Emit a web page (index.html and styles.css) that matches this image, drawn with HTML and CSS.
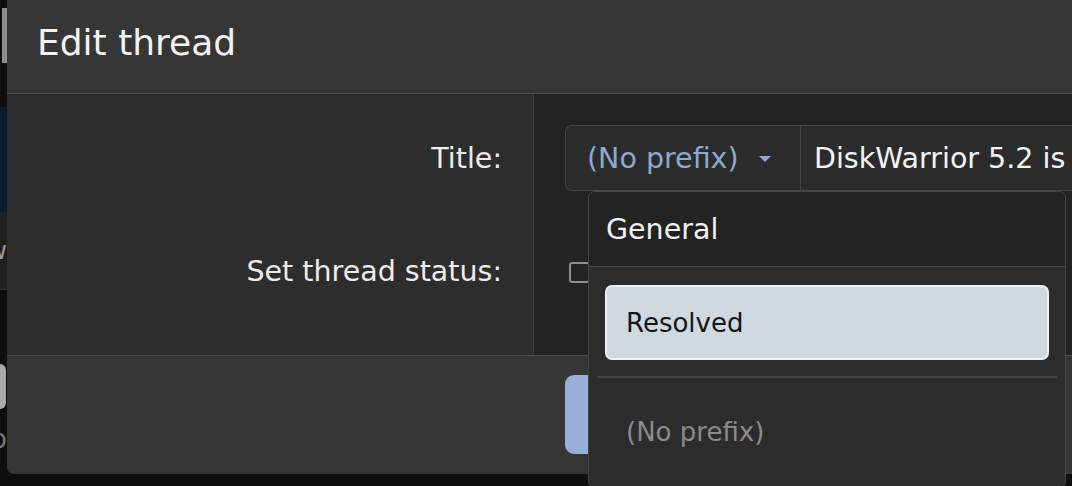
FILE: index.html
```html
<!DOCTYPE html>
<html lang="en">
<head>
<meta charset="utf-8">
<title>Edit thread</title>
<link rel="stylesheet" href="styles.css">
</head>
<body>
<div class="page">
  <div class="bg-strip">
    <div class="bg-bar"></div>
    <div class="bg-nav"></div>
    <div class="bg-row"><span>Vw</span></div>
    <div class="bg-btn"></div>
    <div class="bg-text"><span>Po</span></div>
  </div>

  <div class="modal">
    <div class="modal-head">
      <h1 class="modal-title">Edit thread</h1>
    </div>

    <div class="modal-body">
      <div class="label-cell row-first">Title:</div>
      <div class="field-cell row-first">
        <div class="input-group">
          <div class="prefix-btn">
            <span class="prefix-text">(No prefix)</span>
            <span class="caret"></span>
          </div>
          <div class="title-input">DiskWarrior 5.2 is available for download now</div>

          <div class="menu">
            <div class="menu-header">General</div>
            <div class="menu-body">
              <div class="menu-item is-active">Resolved</div>
              <div class="menu-sep"></div>
              <div class="menu-item is-muted">(No prefix)</div>
            </div>
          </div>
        </div>
      </div>

      <div class="label-cell row-second">Set thread status:</div>
      <div class="field-cell row-second">
        <div class="check-line">
          <span class="checkbox"></span>
          <span class="check-label">Locked</span>
        </div>
        <div class="hint">Locked threads cannot receive new replies, cc</div>
      </div>
    </div>

    <div class="modal-foot">
      <div class="foot-buttons">
        <div class="save-btn">Save</div>
      </div>
    </div>
  </div>
</div>
</body>
</html>
```

FILE: styles.css
```css
html, body {
  margin: 0;
  padding: 0;
}

body {
  width: 1072px;
  height: 486px;
  overflow: hidden;
  background: #0e0e0e;
  font-family: "DejaVu Sans", Verdana, sans-serif;
  color: #ececec;
}

.page {
  display: flex;
  align-items: flex-start;
  height: 486px;
}

/* background page fragments peeking out at left */
.bg-strip {
  flex: none;
  width: 7px;
  height: 486px;
  display: flex;
  flex-direction: column;
  overflow: hidden;
}

.bg-bar {
  height: 55px;
  margin-top: 8px;
  margin-left: 2px;
  background: #8e8e8e;
}

.bg-nav {
  height: 105px;
  margin-top: 44px;
  background: #0c1a2d;
}

.bg-row {
  height: 77px;
  background: #1f1f1f;
  border-bottom: 1px solid #343434;
  display: flex;
  justify-content: flex-end;
  align-items: center;
  font-size: 24px;
  color: #9a9a9a;
}

.bg-btn {
  width: 6px;
  height: 45px;
  margin-top: 74px;
  background: #a9a9a9;
  border-radius: 0 6px 6px 0;
}

.bg-text {
  height: 40px;
  margin-top: 10px;
  display: flex;
  justify-content: flex-end;
  align-items: center;
  font-size: 26px;
  color: #7a7a7a;
}

/* modal */
.modal {
  flex: none;
  width: 1120px;
  border-radius: 0 0 0 7px;
  position: relative;
}

.modal-head {
  height: 94px;
  box-sizing: border-box;
  background: #363636;
  border-bottom: 1px solid #4b4b4b;
  padding-left: 30px;
}

.modal-title {
  margin: 0;
  padding-top: 22px;
  font-size: 36px;
  font-weight: normal;
  line-height: 42px;
  color: #f2f2f2;
}

.modal-body {
  display: grid;
  grid-template-columns: 526px 1fr;
  grid-template-rows: 146px 115px;
  height: 261px;
}

.label-cell {
  background: #2d2d2d;
  text-align: right;
  padding-right: 31px;
  font-size: 28.5px;
  color: #ececec;
}

.field-cell {
  background: #232323;
  border-left: 1px solid #3d3d3d;
  padding-left: 31px;
  overflow: hidden;
}

.label-cell.row-first {
  padding-top: 31px;
  line-height: 68px;
}

.field-cell.row-first {
  padding-top: 31px;
  overflow: visible;
}

.label-cell.row-second {
  line-height: 64px;
}

/* title input group */
.input-group {
  position: relative;
  display: flex;
  height: 66px;
  box-sizing: border-box;
  border: 1px solid #454545;
  border-right: none;
  border-radius: 7px 0 0 7px;
  background: #2b2b2b;
}

.prefix-btn {
  flex: none;
  width: 235px;
  box-sizing: border-box;
  display: flex;
  align-items: center;
  padding-left: 21px;
  border-right: 1px solid #454545;
  font-size: 28.5px;
  color: #8ea8cf;
}

.caret {
  width: 0;
  height: 0;
  margin-left: 20px;
  margin-top: 2px;
  border-left: 6px solid transparent;
  border-right: 6px solid transparent;
  border-top: 6px solid #8ea8cf;
}

.title-input {
  flex: 1;
  display: flex;
  align-items: center;
  padding-left: 13px;
  font-size: 28.5px;
  color: #f4f4f4;
  white-space: nowrap;
  overflow: hidden;
}

/* dropdown menu */
.menu {
  position: absolute;
  top: calc(100% + 1px);
  left: 22px;
  width: 478px;
  height: 297px;
  box-sizing: border-box;
  border: 1px solid #474747;
  border-radius: 7px;
  background: #2c2c2c;
  overflow: hidden;
  z-index: 5;
}

.menu-header {
  height: 75px;
  box-sizing: border-box;
  padding-left: 17px;
  display: flex;
  align-items: center;
  background: #232323;
  border-bottom: 1px solid #464646;
  font-size: 28.5px;
  color: #f2f2f2;
}

.menu-body {
  padding: 18px 16px 0;
}

.menu-item {
  height: 75px;
  box-sizing: border-box;
  display: flex;
  align-items: center;
  padding-left: 19px;
  font-size: 26px;
  border-radius: 7px;
}

.menu-item.is-active {
  background: #d0d8e0;
  border: 2px solid #edf1f5;
  color: #151515;
}

.menu-item.is-muted {
  color: #8b8b8b;
  margin-top: 16px;
  padding-left: 21px;
}

.menu-sep {
  height: 2px;
  margin: 16px -8px 0;
  background: #414141;
}

/* status row */
.check-line {
  height: 64px;
  display: flex;
  align-items: center;
  font-size: 26px;
  color: #e6e6e6;
}

.checkbox {
  width: 21px;
  height: 21px;
  box-sizing: border-box;
  margin-left: 4px;
  margin-top: 1px;
  border: 2px solid #8f8f8f;
  border-radius: 3px;
}

.check-label {
  margin-left: 12px;
}

.hint {
  padding-left: 40px;
  font-size: 26px;
  line-height: 30px;
  margin-top: -8px;
  color: #9a9a9a;
  white-space: nowrap;
}

/* footer */
.modal-foot {
  height: 119px;
  box-sizing: border-box;
  border-top: 1px solid #4b4b4b;
  background: #363636;
  border-radius: 0 0 0 7px;
  padding-top: 19px;
  padding-left: 558px;
}

.save-btn {
  width: 130px;
  height: 79px;
  box-sizing: border-box;
  display: flex;
  align-items: center;
  justify-content: center;
  background: #97b0d8;
  border-radius: 9px;
  font-size: 26px;
  color: #111;
}
```
